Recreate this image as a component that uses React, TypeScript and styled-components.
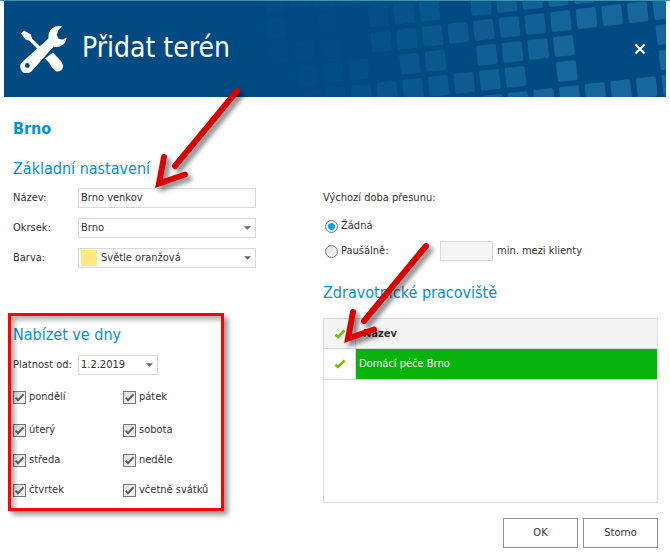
import React from 'react';
import styled, { createGlobalStyle } from 'styled-components';

const GlobalStyle = createGlobalStyle`
  *, *::before, *::after { box-sizing: border-box; }
  body {
    margin: 0;
    background: #fff;
    color: #333;
    font-family: Tahoma, "DejaVu Sans Condensed", "Noto Sans", sans-serif;
    font-size: 11px;
    line-height: 20px;
  }
  input, select, button { font: inherit; color: inherit; margin: 0; }
`;

const Dialog = styled.main`
  position: relative;
  border-top: 1px solid #3596a8;
`;

const Header = styled.header`
  position: relative;
  display: flex;
  align-items: center;
  gap: 14px;
  height: 96px;
  margin: 0 4px;
  padding: 0 20px 0 16px;
  background: #004a83;
  color: #fff;
  overflow: hidden;
`;

const Pattern = styled.svg`
  position: absolute;
  top: 0;
  right: 0;
  width: 400px;
  height: 96px;
`;

const Title = styled.h1`
  flex: 1;
  margin: 0;
  padding-bottom: 2px;
  font-size: 28px;
  font-weight: 400;
  line-height: 32px;
`;

const CloseButton = styled.button`
  position: relative;
  display: flex;
  padding: 0;
  border: 0;
  background: none;
  color: #fff;
`;

const Content = styled.div`
  display: grid;
  grid-template-columns: minmax(0, 243fr) minmax(0, 335fr);
  align-items: start;
  column-gap: 67px;
  padding: 0 12px 0 13px;
`;

const Site = styled.h2`
  grid-column: 1 / -1;
  margin: 20px 0 16px;
  font-size: 16px;
  line-height: 24px;
  color: #0091df;
`;

const Column = styled.div`
  display: flex;
  flex-direction: column;
`;

const Heading = styled.h3`
  margin: 0;
  font-size: 16px;
  font-weight: 400;
  line-height: 24px;
  color: #0091df;
`;

const FieldList = styled.div`
  display: grid;
  gap: 10px;
  margin-top: 7px;
`;

const Field = styled.div`
  display: grid;
  grid-template-columns: 65px minmax(0, 1fr);
  align-items: center;
`;

const Box = styled.div<{ $width?: string }>`
  display: flex;
  align-items: center;
  position: relative;
  width: ${(p) => p.$width ?? 'auto'};
  height: 20px;
  border: 1px solid #d9d9d9;
  background: #fff;
`;

const TextInput = styled.input`
  width: 100%;
  height: 18px;
  padding: 0 2px;
  border: 0;
  background: none;
  outline: none;
`;

const Select = styled.select`
  appearance: none;
  flex: 1;
  min-width: 0;
  height: 18px;
  padding: 0 16px 0 2px;
  border: 0;
  background: none;
  line-height: 18px;
  outline: none;
`;

const Caret = styled.svg`
  position: absolute;
  right: 4px;
  width: 7px;
  height: 4px;
  fill: #666;
  pointer-events: none;
`;

const Swatch = styled.span`
  width: 16px;
  height: 16px;
  margin: 0 2px;
  background: #ffe97f;
`;

const DaysSection = styled.section`
  position: relative;
  margin-top: 55px;
  &::after {
    content: "";
    position: absolute;
    inset: -10px 32px -6px -5px;
    border: 3px solid #f00;
    box-shadow: 4px 4px 5px rgba(0, 0, 0, 0.4), inset 4px 4px 5px rgba(0, 0, 0, 0.3);
    pointer-events: none;
  }
`;

const DateField = styled(Field)`
  margin-top: 8px;
`;

const Days = styled.div`
  display: grid;
  grid-template-columns: 110px 1fr;
  grid-template-rows: 36px 30px 30px 30px;
  margin-top: 4px;
  align-items: center;
`;

const Choice = styled.label`
  display: flex;
  align-items: center;
  gap: 3px;
`;

const CheckInput = styled.input`
  appearance: none;
  width: 13px;
  height: 13px;
  border: 1px solid #777;
  background: linear-gradient(135deg, #ddd, #fafafa);
  &:checked {
    background: url("data:image/svg+xml,%3Csvg xmlns='http://www.w3.org/2000/svg' viewBox='0 0 11 11'%3E%3Cpath d='M1.7 5.7 4 8.3 9.5 2.3' fill='none' stroke='%23606060' stroke-width='2'/%3E%3C/svg%3E"),
      linear-gradient(135deg, #ddd, #fafafa);
  }
`;

const RadioInput = styled.input`
  appearance: none;
  width: 13px;
  height: 13px;
  margin-left: 2px;
  border: 1px solid #777;
  border-radius: 50%;
  background: linear-gradient(135deg, #ddd, #fafafa);
  &:checked {
    background: radial-gradient(circle, #00a2ff 0 3px, #f8f8f8 4px);
  }
`;

const Transfer = styled.fieldset`
  margin: 0;
  padding: 31px 0 0;
  border: 0;
`;

const Legend = styled.legend`
  float: left;
  width: 100%;
  padding: 0;
  margin-bottom: 8px;
`;

const ChoiceRow = styled.div`
  display: flex;
  align-items: center;
  clear: both;
  height: 20px;
  & + & { margin-top: 5px; }
`;

const Minutes = styled.input`
  width: 53px;
  height: 20px;
  margin-right: 4px;
  border: 1px solid #d9d9d9;
  background: #f5f5f5;
`;

const FlatRate = styled(Choice)`
  width: 117px;
`;

const Workplace = styled.section`
  margin-top: 20px;
`;

const TableFrame = styled.div`
  min-height: 185px;
  margin-top: 13px;
  border: 1px solid #d9d9d9;
`;

const Table = styled.table`
  width: 100%;
  border-collapse: separate;
  border-spacing: 0;
  table-layout: fixed;
  text-align: left;
  th, td {
    height: 30px;
    padding: 0 3px;
    border-bottom: 1px solid #d9d9d9;
  }
  td { height: 31px; }
  th { background: #f4f4f4; }
  th:first-child, td:first-child {
    width: 32px;
    padding: 0 9px 0 10px;
    border-right: 1px solid #d9d9d9;
  }
  svg { display: block; }
`;

const NameHead = styled.th`
  && { padding-left: 7px; }
`;

const SelectedCell = styled.td`
  background: #09b30b;
  color: #fff;
`;

const Footer = styled.footer`
  display: flex;
  justify-content: flex-end;
  gap: 5px;
  padding: 13px 12px 9px;
`;

const Button = styled.button`
  width: 75px;
  height: 30px;
  padding: 0;
  border: 1px solid #8f8f8f;
  background: #fff;
`;

const Arrow = styled.svg<{ $x: number; $y: number }>`
  position: absolute;
  left: ${(p) => p.$x}px;
  top: ${(p) => p.$y}px;
  width: 100px;
  height: 120px;
  pointer-events: none;
  filter: drop-shadow(4px 4px 2px rgba(0, 0, 0, 0.45));
`;

const tileRows: { row: number; cols: number[] }[] = [
  { row: -2, cols: [-4, -3, -2, -1, 0] },
  { row: -1, cols: [-4, -2, 0, 1, 2, 4, 5, 6, 7, 8] },
  { row: 0, cols: [-4, -3, -2, 0, 1, 2, 3, 4, 5, 6, 7, 8, 9, 10, 11] },
  { row: 1, cols: [-3, -2, -1, 1, 2, 4, 5, 6, 7, 11] },
  { row: 2, cols: [-4, -3, -2, -1, 0, 1, 2, 3, 4, 5, 7, 11] },
  { row: 3, cols: [4, 5, 6, 7, 8, 9, 10, 11] },
];

function Tiles() {
  return (
    <Pattern viewBox="0 0 400 96" aria-hidden="true">
      {tileRows.flatMap(({ row, cols }) =>
        cols.map((col) => {
          const x = 115.3 + col * 25.65 + row * 3;
          const y = 40.7 - col * 2.95 + row * 25;
          return (
            <rect
              key={`${row}:${col}`}
              x={-10}
              y={-10}
              width={20}
              height={20}
              rx={2}
              fill="#1a6ca1"
              opacity={Math.max(0.06, Math.min(0.85, 0.22 + col * 0.08 + row * 0.04))}
              transform={`translate(${x} ${y}) rotate(-6)`}
            />
          );
        }),
      )}
    </Pattern>
  );
}

function ToolsIcon() {
  return (
    <svg width="48" height="48" viewBox="0 0 48 48" aria-hidden="true">
      <path
        fill="#fff"
        d="M42 1.500C36 0 30.500 3 28.800 8.500 28.300 11 28.500 12.500 28.500 13.500L2.800 36.500A6.600 6.600 0 1 0 12 45.800L33.500 21.800C40 23 46 19.500 46.600 12.500L42.500 14.800 38.500 13.500 36.800 9.800 38.200 5.500Z"
      />
      <path fill="#fff" d="M1 8.500 4 5.500 10.800 9.500 12 13.500 20 21.500 17.500 24 9.500 15.800 5.500 14.500Z" />
      <path
        fill="#fff"
        d="M33 27.500 38 33Q43 37 43 42C42 46 38.500 47.500 35.500 46Q31.500 43 29 37.500L25 33.500Z"
      />
      <path d="m23.300 34.500 10-10" stroke="#004a83" strokeWidth="1" />
      <circle cx="7.300" cy="40.500" r="2.400" fill="#004a83" />
    </svg>
  );
}

function CaretIcon() {
  return (
    <Caret viewBox="0 0 8 4" aria-hidden="true">
      <path d="M0 0h8L4 4z" />
    </Caret>
  );
}

function GreenCheck() {
  return (
    <svg width="12" height="10" viewBox="0 0 12 10" role="img" aria-label="Vybráno">
      <path d="M1.500 5.500 4 8 10.500 1.500" fill="none" stroke="#6cc000" strokeWidth="2.500" />
    </svg>
  );
}

function PointerArrow({ x, y }: { x: number; y: number }) {
  return (
    <Arrow $x={x} $y={y} viewBox="0 0 100 120" aria-hidden="true">
      <g fill="none" stroke="#dc0000" strokeWidth="6" strokeLinecap="round">
        <path d="M88 10 26 85" />
        <path d="M15 76 10 102.500 36 93.500" strokeLinejoin="miter" />
      </g>
    </Arrow>
  );
}

const days = ['pondělí', 'pátek', 'úterý', 'sobota', 'středa', 'neděle', 'čtvrtek', 'včetně svátků'];

export default function App() {
  return (
    <>
      <GlobalStyle />
      <Dialog>
        <Header>
          <Tiles />
          <ToolsIcon />
          <Title>Přidat terén</Title>
          <CloseButton type="button" aria-label="Zavřít">
            <svg width="12" height="12" viewBox="0 0 12 12">
              <path d="m1.500 1.500 9 9m0-9-9 9" stroke="currentColor" strokeWidth="2.200" />
            </svg>
          </CloseButton>
        </Header>

        <Content>
          <Site>Brno</Site>
          <Column>
            <section>
              <Heading>Základní nastavení</Heading>
              <FieldList>
                <Field>
                  <label htmlFor="name">Název:</label>
                  <Box>
                    <TextInput id="name" defaultValue="Brno venkov" />
                  </Box>
                </Field>
                <Field>
                  <label htmlFor="district">Okrsek:</label>
                  <Box>
                    <Select id="district">
                      <option>Brno</option>
                    </Select>
                    <CaretIcon />
                  </Box>
                </Field>
                <Field>
                  <label htmlFor="color">Barva:</label>
                  <Box>
                    <Swatch />
                    <Select id="color">
                      <option>Světle oranžová</option>
                    </Select>
                    <CaretIcon />
                  </Box>
                </Field>
              </FieldList>
            </section>

            <DaysSection>
              <Heading>Nabízet ve dny</Heading>
              <DateField>
                <label htmlFor="valid-from">Platnost od:</label>
                <Box $width="80px">
                  <Select id="valid-from">
                    <option>1.2.2019</option>
                  </Select>
                  <CaretIcon />
                </Box>
              </DateField>
              <Days>
                {days.map((day) => (
                  <Choice key={day}>
                    <CheckInput type="checkbox" defaultChecked />
                    {day}
                  </Choice>
                ))}
              </Days>
            </DaysSection>
          </Column>

          <Column>
            <Transfer>
              <Legend>Výchozí doba přesunu:</Legend>
              <ChoiceRow>
                <Choice>
                  <RadioInput type="radio" name="transfer" defaultChecked />
                  Žádná
                </Choice>
              </ChoiceRow>
              <ChoiceRow>
                <FlatRate>
                  <RadioInput type="radio" name="transfer" />
                  Paušálně:
                </FlatRate>
                <Minutes id="minutes" disabled />
                <label htmlFor="minutes">min. mezi klienty</label>
              </ChoiceRow>
            </Transfer>

            <Workplace>
              <Heading>Zdravotnické pracoviště</Heading>
              <TableFrame>
                <Table>
                  <thead>
                    <tr>
                      <th scope="col"><GreenCheck /></th>
                      <NameHead scope="col">Název</NameHead>
                    </tr>
                  </thead>
                  <tbody>
                    <tr>
                      <td><GreenCheck /></td>
                      <SelectedCell>Domácí péče Brno</SelectedCell>
                    </tr>
                  </tbody>
                </Table>
              </TableFrame>
            </Workplace>
          </Column>
        </Content>

        <Footer>
          <Button type="button">OK</Button>
          <Button type="button">Storno</Button>
        </Footer>

        <PointerArrow x={149} y={80} />
        <PointerArrow x={338} y={235} />
      </Dialog>
    </>
  );
}
